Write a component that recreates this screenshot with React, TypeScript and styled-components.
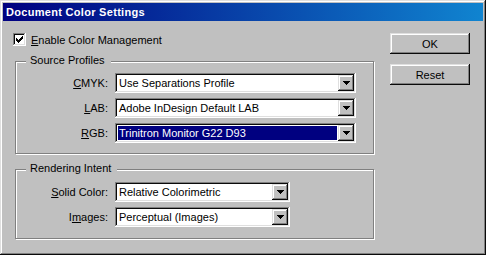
import React from 'react';
import styled, { createGlobalStyle } from 'styled-components';

const Global = createGlobalStyle`
  html, body { margin: 0; padding: 0; background: #c0c0c0; }
  body {
    font-family: "Liberation Sans", Arial, sans-serif;
    font-size: 11px;
    color: #000;
  }
`;

const raised = `
  box-shadow: inset -1px -1px #0a0a0a, inset 1px 1px #dfdfdf,
    inset -2px -2px #808080, inset 2px 2px #ffffff;
`;

const sunken = `
  box-shadow: inset -1px -1px #ffffff, inset 1px 1px #808080,
    inset -2px -2px #dfdfdf, inset 2px 2px #0a0a0a;
`;

const Window = styled.div`
  box-sizing: border-box;
  width: 486px;
  height: 255px;
  background: #c0c0c0;
  padding: 3px;
  ${raised}
  display: flex;
  flex-direction: column;
`;

const TitleBar = styled.div`
  height: 18px;
  flex: none;
  background: linear-gradient(90deg, #000080 0%, #1084d0 100%);
  color: #fff;
  font-weight: bold;
  font-size: 11px;
  letter-spacing: 0.3px;
  display: flex;
  align-items: center;
  padding-left: 3px;
`;

const Body = styled.div`
  display: flex;
  flex: 1;
  padding: 12px 13px 0 10px;
  gap: 15px;
`;

const LeftCol = styled.div`
  width: 362px;
  display: flex;
  flex-direction: column;
`;

const RightCol = styled.div`
  width: 80px;
  display: flex;
  flex-direction: column;
  gap: 10px;
`;

const CheckRow = styled.label`
  display: flex;
  align-items: center;
  gap: 5px;
  height: 13px;
`;

const CheckBox = styled.span`
  box-sizing: border-box;
  width: 13px;
  height: 13px;
  background: #fff;
  ${sunken}
  display: flex;
  align-items: center;
  justify-content: center;
`;

const Group = styled.div<{ $top: number; $padTop: number; $padBottom: number }>`
  position: relative;
  box-sizing: border-box;
  width: 359px;
  margin: ${(p) => p.$top}px 0 0 2px;
  border: 1px solid #808080;
  box-shadow: 1px 1px 0 #fff, inset 1px 1px 0 #fff;
  padding: ${(p) => p.$padTop}px 0 ${(p) => p.$padBottom}px 0;
  display: flex;
  flex-direction: column;
  gap: 5px;
`;

const Legend = styled.span`
  position: absolute;
  top: -8px;
  left: 10px;
  line-height: 13px;
  padding: 0 6px 0 4px;
  background: #c0c0c0;
`;

const Row = styled.div`
  display: grid;
  grid-template-columns: 92px auto;
  column-gap: 7px;
  align-items: center;
  height: 20px;
`;

const Label = styled.span`
  text-align: right;
`;

const Combo = styled.div<{ $width: number }>`
  box-sizing: border-box;
  width: ${(p) => p.$width}px;
  height: 20px;
  background: #fff;
  ${sunken}
  padding: 2px;
  display: flex;
`;

const ComboText = styled.div<{ $selected?: boolean }>`
  flex: 1;
  display: flex;
  align-items: center;
  white-space: nowrap;
  overflow: hidden;
  padding-left: ${(p) => (p.$selected ? 1 : 2)}px;
  margin: ${(p) => (p.$selected ? '1px 1px 1px 1px' : '0')};
  background: ${(p) => (p.$selected ? '#000080' : 'transparent')};
  color: ${(p) => (p.$selected ? '#fff' : '#000')};
`;

const ArrowButton = styled.div`
  box-sizing: border-box;
  width: 16px;
  height: 16px;
  background: #c0c0c0;
  ${raised}
  display: flex;
  align-items: center;
  justify-content: center;
`;

const Button = styled.button`
  box-sizing: border-box;
  width: 80px;
  height: 21px;
  border: none;
  background: #c0c0c0;
  ${raised}
  font-family: inherit;
  font-size: 11px;
  color: #000;
  padding: 0;
`;

const Arrow = () => (
  <svg width="7" height="4" viewBox="0 0 7 4" shapeRendering="crispEdges">
    <path d="M0 0H7L3.5 4Z" fill="#000" />
  </svg>
);

const Check = () => (
  <svg width="7" height="7" viewBox="0 0 7 7" shapeRendering="crispEdges">
    <path
      d="M6 0h1v3h-1v1h-1v1h-1v1h-1v1h-1v-1h-1v-1h-1v-3h1v1h1v1h1v-1h1v-1h1z"
      fill="#000"
    />
  </svg>
);

type ComboProps = { width: number; value: string; selected?: boolean };

const ComboBox = ({ width, value, selected }: ComboProps) => (
  <Combo $width={width}>
    <ComboText $selected={selected}>{value}</ComboText>
    <ArrowButton>
      <Arrow />
    </ArrowButton>
  </Combo>
);

export default function App() {
  return (
    <>
      <Global />
      <Window>
        <TitleBar>Document Color Settings</TitleBar>
        <Body>
          <LeftCol>
            <CheckRow>
              <CheckBox>
                <Check />
              </CheckBox>
              <span>
                <u>E</u>nable Color Management
              </span>
            </CheckRow>
            <Group $top={15} $padTop={11} $padBottom={10}>
              <Legend>Source Profiles</Legend>
              <Row>
                <Label>
                  <u>C</u>MYK:
                </Label>
                <ComboBox width={241} value="Use Separations Profile" />
              </Row>
              <Row>
                <Label>
                  <u>L</u>AB:
                </Label>
                <ComboBox width={241} value="Adobe InDesign Default LAB" />
              </Row>
              <Row>
                <Label>
                  <u>R</u>GB:
                </Label>
                <ComboBox width={241} value="Trinitron Monitor G22 D93" selected />
              </Row>
            </Group>
            <Group $top={15} $padTop={12} $padBottom={11}>
              <Legend>Rendering Intent</Legend>
              <Row>
                <Label>
                  <u>S</u>olid Color:
                </Label>
                <ComboBox width={175} value="Relative Colorimetric" />
              </Row>
              <Row>
                <Label>
                  I<u>m</u>ages:
                </Label>
                <ComboBox width={175} value="Perceptual (Images)" />
              </Row>
            </Group>
          </LeftCol>
          <RightCol>
            <Button>OK</Button>
            <Button>Reset</Button>
          </RightCol>
        </Body>
      </Window>
    </>
  );
}
